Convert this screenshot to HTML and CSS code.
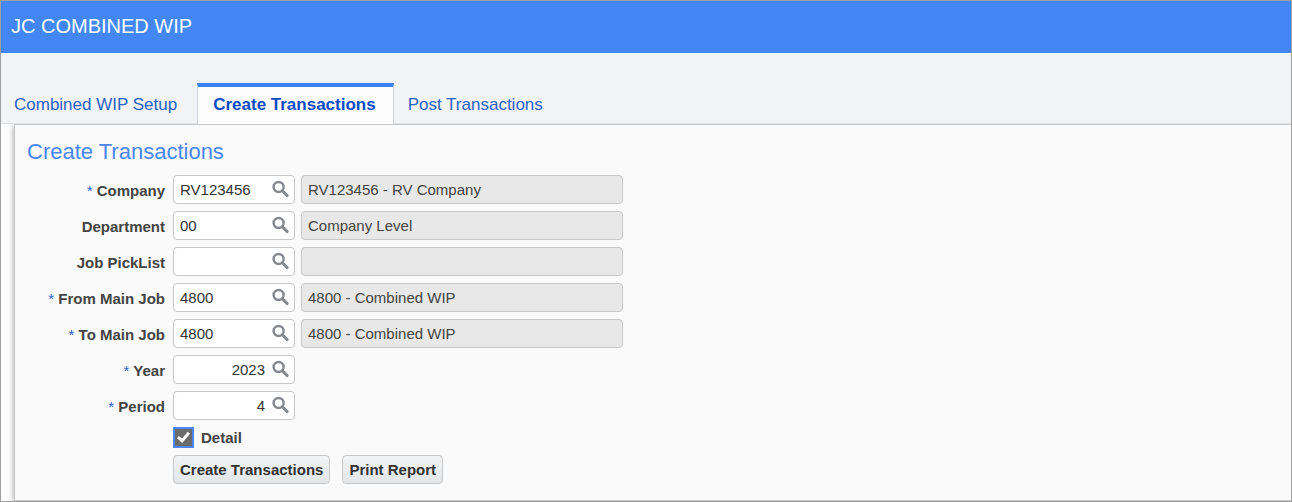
FILE: index.html
```html
<!DOCTYPE html>
<html lang="en">
<head>
    <meta charset="UTF-8">
    <meta name="viewport" content="width=device-width, initial-scale=1.0">
    <title>JC Combined WIP</title>
    <link rel="stylesheet" href="styles.css">
</head>
<body>

<svg class="sprite" aria-hidden="true">
    <symbol id="search" viewBox="0 0 18 18">
        <circle cx="6.6" cy="7" r="5" fill="none" stroke="currentColor" stroke-width="2.4"/>
        <path d="M10.4 10.8 L15.2 15.6" fill="none" stroke="currentColor" stroke-width="3" stroke-linecap="round"/>
    </symbol>
</svg>

<div class="page">
    <header class="title-bar">
        <h1>JC COMBINED WIP</h1>
    </header>

    <nav class="tabs">
        <a class="tab" href="#setup">Combined WIP Setup</a>
        <a class="tab active" href="#create" aria-current="page">Create Transactions</a>
        <a class="tab" href="#post">Post Transactions</a>
    </nav>

    <main class="panel">
        <h2>Create Transactions</h2>
        <form class="form">
            <div class="row">
                <label for="company"><span class="required">*</span> Company</label>
                <div class="lookup">
                    <input type="text" id="company" value="RV123456">
                    <button type="button" aria-label="Find company"><svg><use href="#search"/></svg></button>
                </div>
                <input class="description" type="text" aria-label="Company name" value="RV123456 - RV Company" readonly>
            </div>
            <div class="row">
                <label for="department">Department</label>
                <div class="lookup">
                    <input type="text" id="department" value="00">
                    <button type="button" aria-label="Find department"><svg><use href="#search"/></svg></button>
                </div>
                <input class="description" type="text" aria-label="Department name" value="Company Level" readonly>
            </div>
            <div class="row">
                <label for="picklist">Job PickList</label>
                <div class="lookup">
                    <input type="text" id="picklist">
                    <button type="button" aria-label="Find job picklist"><svg><use href="#search"/></svg></button>
                </div>
                <input class="description" type="text" aria-label="Job picklist name" readonly>
            </div>
            <div class="row">
                <label for="from-job"><span class="required">*</span> From Main Job</label>
                <div class="lookup">
                    <input type="text" id="from-job" value="4800">
                    <button type="button" aria-label="Find from main job"><svg><use href="#search"/></svg></button>
                </div>
                <input class="description" type="text" aria-label="From main job name" value="4800 - Combined WIP" readonly>
            </div>
            <div class="row">
                <label for="to-job"><span class="required">*</span> To Main Job</label>
                <div class="lookup">
                    <input type="text" id="to-job" value="4800">
                    <button type="button" aria-label="Find to main job"><svg><use href="#search"/></svg></button>
                </div>
                <input class="description" type="text" aria-label="To main job name" value="4800 - Combined WIP" readonly>
            </div>
            <div class="row">
                <label for="year"><span class="required">*</span> Year</label>
                <div class="lookup number">
                    <input type="text" id="year" value="2023">
                    <button type="button" aria-label="Find year"><svg><use href="#search"/></svg></button>
                </div>
            </div>
            <div class="row">
                <label for="period"><span class="required">*</span> Period</label>
                <div class="lookup number">
                    <input type="text" id="period" value="4">
                    <button type="button" aria-label="Find period"><svg><use href="#search"/></svg></button>
                </div>
            </div>
            <div class="check">
                <input type="checkbox" id="detail" checked>
                <label for="detail">Detail</label>
            </div>
            <div class="actions">
                <button type="button">Create Transactions</button>
                <button type="button">Print Report</button>
            </div>
        </form>
    </main>
</div>

</body>
</html>
```
FILE: styles.css
```css
* {
    box-sizing: border-box;
}
body {
    margin: 0;
    font-family: "Liberation Sans", Arial, sans-serif;
    font-size: 15px;
    color: #444;
    background: #fff;
}
.sprite {
    display: none;
}
.page {
    display: flex;
    flex-direction: column;
    min-height: 100vh;
    border: 1px solid #a0a0a0;
}
.title-bar {
    padding: 14px 10px 15px;
    background: #4287f5;
    color: #fff;
}
.title-bar h1 {
    margin: 0;
    font-size: 20px;
    line-height: 23px;
    font-weight: normal;
}
.tabs {
    display: flex;
    padding-top: 29px;
    background: #f1f3f5;
    border-top: 1px solid #fff;
    border-bottom: 1px solid #dde1e6;
}
.tab {
    padding: 8px 17px 8px 13px;
    border: 1px solid transparent;
    border-width: 4px 1px 0;
    font-size: 17px;
    line-height: 20px;
    color: #2a62c6;
    text-decoration: none;
}
.tab:first-child {
    padding-left: 12px;
    padding-right: 19px;
}
.tab.active {
    margin-bottom: -1px;
    padding-left: 15px;
    border-color: #3b82f6 #cfd5dc;
    background: #fcfcfc;
    color: #0a4bc4;
    font-weight: bold;
}
.panel {
    flex: 1;
    margin-left: 13px;
    padding: 14px 12px;
    border: 1px solid #c8c8c8;
    border-right: 0;
    background: #fafafa;
    box-shadow: 0 1px 6px rgba(0, 0, 0, 0.4);
    clip-path: inset(0 0 0 -13px);
}
.panel h2 {
    margin: 0 0 10px;
    font-size: 22px;
    line-height: 26px;
    font-weight: normal;
    color: #4a86f4;
}
.form {
    display: flex;
    flex-direction: column;
    gap: 7px;
}
.row {
    display: grid;
    grid-template-columns: 138px 122px minmax(0, 322px);
    column-gap: 6px;
    align-items: center;
    padding-left: 2px;
}
.row label {
    padding: 2px 2px 0 0;
    text-align: right;
    white-space: nowrap;
}
label {
    font-weight: bold;
}
.required {
    color: #2a62c6;
    font-weight: normal;
}
.lookup {
    display: flex;
    align-items: center;
    height: 29px;
    padding: 0 4px 1px 6px;
    border: 1px solid #c8c8c8;
    border-radius: 4px;
    background: #fff;
}
.lookup input {
    flex: 1;
    min-width: 0;
    padding: 0;
    border: 0;
    outline: 0;
    background: none;
    font: inherit;
    color: #333;
}
.lookup.number input {
    margin-right: 7px;
    text-align: right;
}
.lookup button {
    display: flex;
    padding: 0;
    border: 0;
    background: none;
    color: #868a8e;
}
.lookup svg {
    width: 18px;
    height: 18px;
}
.description {
    height: 29px;
    padding: 0 6px 1px;
    border: 1px solid #c8c8c8;
    border-radius: 4px;
    background: #e8e8e8;
    font: inherit;
    color: #444;
}
.check {
    display: flex;
    align-items: center;
    gap: 7px;
    padding-left: 146px;
}
.check input {
    display: flex;
    width: 21px;
    height: 21px;
    margin: 0;
    border: 2px solid #4a86f4;
    background: #6b6b6b;
    appearance: none;
}
.check input:checked::before {
    content: "";
    box-sizing: border-box;
    width: 7px;
    height: 12px;
    margin: 1px auto 0;
    border: solid #fff;
    border-width: 0 3px 3px 0;
    transform: rotate(40deg);
}
.actions {
    display: flex;
    gap: 12px;
    padding-left: 146px;
}
.actions button {
    height: 29px;
    padding: 0 6px 1px;
    border: 1px solid #c8c8c8;
    border-radius: 4px;
    background: linear-gradient(#f2f3f4, #e2e6ea);
    font: inherit;
    font-weight: bold;
    color: #333;
}
```
